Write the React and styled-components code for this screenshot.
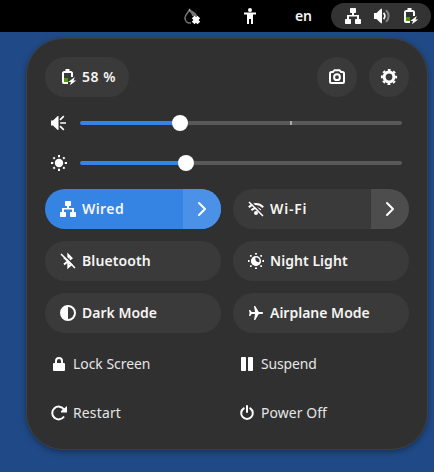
import React from "react";
import styled, { createGlobalStyle } from "styled-components";

const GlobalStyle = createGlobalStyle`
  * { box-sizing: border-box; }
  body {
    margin: 0;
    background: #204a87;
    font-family: "Noto Sans", sans-serif;
    font-size: 14px;
    color: #f6f5f4;
    overflow: hidden;
  }
`;

const Desktop = styled.div`
  width: 434px;
  height: 472px;
  background: #204a87;
`;

const TopBar = styled.header`
  height: 32px;
  padding-right: 3px;
  background: #000;
  display: flex;
  align-items: center;
  justify-content: flex-end;
  font-weight: 600;
`;

const BarItem = styled.div`
  display: flex;
  align-items: center;
  margin-right: ${(p) => p.$gap}px;
  font-size: 14px;
  line-height: 20px;
`;

const StatusPill = styled.div`
  display: flex;
  align-items: center;
  justify-content: space-between;
  width: 100px;
  height: 26px;
  padding: 0 13px 0 14px;
  border-radius: 13px;
  background: #333;
`;

const Panel = styled.main`
  width: 402px;
  height: 412px;
  margin: 6px 0 0 26px;
  padding: 18px;
  border: 1px solid #3f3f3f;
  border-radius: 37px;
  background: #303030;
  box-shadow: 0 2px 6px rgba(0, 0, 0, 0.35);
`;

const Header = styled.div`
  display: flex;
  gap: 12px;
  height: 40px;
`;

const BatteryButton = styled.button`
  display: flex;
  align-items: center;
  gap: 6px;
  width: 84px;
  height: 40px;
  margin-right: auto;
  padding: 0 0 0 15px;
  border: 0;
  border-radius: 20px;
  background: #3a3a3a;
  color: #f6f5f4;
  font: 600 14px "Noto Sans", sans-serif;
  white-space: nowrap;
`;

const RoundButton = styled.button`
  display: flex;
  align-items: center;
  justify-content: center;
  width: 40px;
  height: 40px;
  padding: 0;
  border: 0;
  border-radius: 50%;
  background: #3a3a3a;
  color: #fff;
`;

const Sliders = styled.div`
  display: grid;
  grid-auto-rows: 40px;
  padding: 6px 7px 6px 6px;
`;

const SliderRow = styled.div`
  display: flex;
  align-items: center;
  gap: 13px;
`;

const Track = styled.div`
  position: relative;
  flex: 1;
  height: 4px;
  border-radius: 2px;
  background: linear-gradient(to right, #3584e4 ${(p) => p.$value}px, #595959 ${(p) => p.$value}px);
`;

const Thumb = styled.div`
  position: absolute;
  top: -6px;
  left: ${(p) => p.$value - 8}px;
  width: 16px;
  height: 16px;
  border-radius: 50%;
  background: #fff;
`;

const Mark = styled.div`
  position: absolute;
  top: 0;
  left: 210px;
  width: 2px;
  height: 4px;
  background: #a8a8a8;
`;

const Tiles = styled.div`
  display: grid;
  grid-template-columns: 176px 176px;
  grid-auto-rows: 40px;
  gap: 12px;
`;

const Tile = styled.div`
  display: flex;
  align-items: stretch;
  overflow: hidden;
  border-radius: 20px;
  background: ${(p) => (p.$active ? "#3584e4" : "#3a3a3a")};
`;

const TileMain = styled.div`
  display: flex;
  flex: 1;
  align-items: center;
  gap: 6px;
  padding-left: 15px;
  font-weight: 600;
  font-size: 14px;
  white-space: nowrap;
`;

const Label = styled.span`
  line-height: 20px;
  padding-bottom: 1px;
  letter-spacing: ${(p) => p.$tracking || 0}px;
`;

const TileArrow = styled.div`
  display: flex;
  align-items: center;
  justify-content: center;
  width: 38px;
  background: ${(p) => (p.$active ? "#4a91e7" : "#4d4d4d")};
`;

const Actions = styled.div`
  display: grid;
  grid-template-columns: 188px 1fr;
  grid-auto-rows: 49px;
  padding: 6px 0 0 6px;
`;

const Action = styled.div`
  display: flex;
  align-items: center;
  gap: 6px;
  font-size: 13.9px;
  letter-spacing: ${(p) => p.$tracking || 0}px;
  color: #e6e6e6;
`;

const Glyph = styled.svg.attrs({ viewBox: "0 0 16 16", width: 16, height: 16 })`
  display: block;
  flex: none;
  color: #fff;
  fill: currentColor;
  overflow: visible;
`;

const line = { fill: "none", stroke: "currentColor", strokeWidth: 2 };

const Network = () => (
  <Glyph>
    <rect x="5" y="0" width="6" height="5" rx=".7" />
    <rect x="0" y="11" width="6" height="5" rx=".7" />
    <rect x="10" y="11" width="6" height="5" rx=".7" />
    <path d="M7 5h2v2h5v4h-2V8.500H4V11H2V7h5z" />
  </Glyph>
);

const Battery = () => (
  <Glyph>
    <path d="M4 9h4v4H4z" fill="#4e9a06" />
    <path d="M8 14H3.800A.8.8 0 0 1 3 13.200V4.300A1.200 1.200 0 0 1 4.200 3H10.800A1.200 1.200 0 0 1 12 4.300V8" {...line} />
    <path d="M5.500 0h4v3h-4z" />
    <path d="M14.800 8 8.300 13H11L10 16.200 16.200 11.500H13.500z" />
  </Glyph>
);

const Volume = () => (
  <Glyph>
    <path d="M0 5h2.500L7 .8h1v14.400H7L2.500 11H0z" />
    <path d="M9.500 5c1.900 1.700 1.900 4.300 0 6" {...line} strokeWidth="1.700" />
    <path d="M12 2.200c3.500 3.300 3.500 8.300 0 11.600" {...line} opacity=".4" />
  </Glyph>
);

const Speaker = () => (
  <Glyph>
    <path d="M0 5.500h2L6.700 1h.8v14h-.8L2 10.500H0z" />
    <path d="M9.200 8H15M9 4.800l3.800-3.600M9 11.200l3.800 3.600" {...line} strokeWidth="1.700" />
  </Glyph>
);

const NoDrop = () => (
  <Glyph>
    <path d="M5.800 1C5 4.300 1 6 1 10c0 3 2.200 5 5 5h1" {...line} strokeWidth="1.600" opacity=".45" />
    <path d="M5 .2C6.500 2.500 12.800 4.200 13.200 8L11.500 9.500 8 7.800C8.500 6.500 6 4.800 5 3z" opacity=".45" />
    <path d="m9.200 9 5.600 6M14.800 9l-5.600 6" {...line} strokeWidth="3.800" />
  </Glyph>
);

const Accessibility = () => (
  <Glyph>
    <circle cx="8" cy="2" r="2" />
    <path d="M2 4.500h12v2h-3V16H9v-5H7v5H5V6.500H2z" />
  </Glyph>
);

const Camera = () => (
  <Glyph>
    <path d="M1 4.500c0-.8.500-1.500 1.500-1.500H4l1.500-1.800h5L12 3h1.500c1 0 1.500.700 1.500 1.500v8c0 1-.5 1.500-1.500 1.500h-11C1.500 14 1 13.500 1 12.500z" {...line} />
    <circle cx="8" cy="8.200" r="2.900" {...line} />
  </Glyph>
);

const Gear = () => (
  <Glyph>
    <circle cx="8" cy="8" r="4.900" {...line} strokeWidth="3" />
    <circle cx="8" cy="8" r="7.100" {...line} strokeDasharray="2.788 2.788" strokeDashoffset="1.394" />
  </Glyph>
);

const Sun = () => (
  <Glyph>
    <circle cx="8" cy="8" r="4.200" />
    <path d="M8 0v2.200M8 13.800V16M0 8h2.200M13.800 8H16M2.400 2.400l1.400 1.400M12.200 12.200l1.400 1.400M2.400 13.600l1.400-1.400M12.200 3.800l1.400-1.400" {...line} />
  </Glyph>
);

const Chevron = () => (
  <Glyph>
    <path d="m5 2 6 6-6 6" {...line} strokeLinecap="round" strokeLinejoin="round" />
  </Glyph>
);

const WifiOff = () => (
  <Glyph>
    <path d="M.8 6.200C5 2 11 2 15.200 6.200M3.400 9.200c2.700-2.600 6.500-2.600 9.200 0" {...line} />
    <circle cx="8" cy="12" r="2" />
    <path d="M2 0 16 14" stroke="#3a3a3a" strokeWidth="1.600" />
    <path d="m1 1 14 14" {...line} strokeWidth="1.500" />
  </Glyph>
);

const BluetoothOff = () => (
  <Glyph>
    <path d="m4 11.500 7.500-6.300L8.300 2v12l3.200-2.800L4 4.500" {...line} />
    <path d="M2.200 0 16 13.800" stroke="#3a3a3a" strokeWidth="1.400" />
    <path d="m1 1 14 14" {...line} strokeWidth="1.600" />
  </Glyph>
);

const NightLight = () => (
  <Glyph>
    <circle cx="8" cy="8" r="4.300" {...line} strokeWidth="1.600" />
    <path d="M7.500 3.500A4.500 4.500 0 1 0 12.500 8.500C10 10.500 6.300 8 7.500 3.500" />
    <path d="M7 0h2v1.600H7zM7 14.400h2V16H7zM0 7h1.600v2H0zM14.400 7H16v2h-1.600zM2 2h1.700v1.700H2zM12.300 2H14v1.700h-1.700zM2 12.300h1.700V14H2zM12.300 12.300H14V14h-1.700z" />
  </Glyph>
);

const Contrast = () => (
  <Glyph>
    <circle cx="8" cy="8" r="7" {...line} />
    <path d="M8 1v14A7 7 0 0 1 8 1" />
  </Glyph>
);

const Plane = () => (
  <Glyph>
    <path d="M1 5h1.200l1.500 2H7L6 1h1.200l3.600 6H14c1.500 0 1.500 2 0 2h-3.200l-3.600 6H6l1-6H3.700l-1.500 2H1l.6-3z" />
  </Glyph>
);

const Lock = () => (
  <Glyph>
    <rect x="2" y="7" width="12" height="8" rx="1" />
    <path d="M5 8V5a3 3 0 0 1 6 0v3" {...line} />
  </Glyph>
);

const Pause = () => (
  <Glyph>
    <rect x="2" y="1" width="5" height="14" rx=".7" />
    <rect x="9" y="1" width="5" height="14" rx=".7" />
  </Glyph>
);

const Restart = () => (
  <Glyph>
    <path d="M13 11.500A6.400 6.400 0 1 1 13 4.500" {...line} />
    <path d="M16 1v6.500h-6V6z" />
  </Glyph>
);

const Power = () => (
  <Glyph>
    <path d="M4.800 3.300a5.800 5.800 0 1 0 6.400 0M8 1v6" {...line} strokeLinecap="round" />
  </Glyph>
);

const tiles = [
  { label: "Wired", icon: Network, active: true, menu: true, tracking: 0.4 },
  { label: "Wi-Fi", icon: WifiOff, menu: true, tracking: 0.8 },
  { label: "Bluetooth", icon: BluetoothOff, tracking: 0.1 },
  { label: "Night Light", icon: NightLight, tracking: 0.05 },
  { label: "Dark Mode", icon: Contrast },
  { label: "Airplane Mode", icon: Plane },
];

const actions = [
  { label: "Lock Screen", icon: Lock },
  { label: "Suspend", icon: Pause, tracking: -0.1 },
  { label: "Restart", icon: Restart, tracking: 0.2 },
  { label: "Power Off", icon: Power, tracking: 0.1 },
];

export default function App() {
  return (
    <Desktop>
      <GlobalStyle />
      <TopBar>
        <BarItem $gap={42}><NoDrop /></BarItem>
        <BarItem $gap={37}><Accessibility /></BarItem>
        <BarItem $gap={19}>en</BarItem>
        <StatusPill>
          <Network />
          <Volume />
          <Battery />
        </StatusPill>
      </TopBar>
      <Panel>
        <Header>
          <BatteryButton><Battery /><Label $tracking={0.5}>58 %</Label></BatteryButton>
          <RoundButton aria-label="Take screenshot"><Camera /></RoundButton>
          <RoundButton aria-label="Settings"><Gear /></RoundButton>
        </Header>
        <Sliders>
          <SliderRow>
            <Speaker />
            <Track $value={100}><Mark /><Thumb $value={100} /></Track>
          </SliderRow>
          <SliderRow>
            <Sun />
            <Track $value={105.5}><Thumb $value={105.5} /></Track>
          </SliderRow>
        </Sliders>
        <Tiles>
          {tiles.map(({ label, icon: Icon, active, menu, tracking }) => (
            <Tile key={label} $active={active}>
              <TileMain><Icon /><Label $tracking={tracking}>{label}</Label></TileMain>
              {menu && <TileArrow $active={active}><Chevron /></TileArrow>}
            </Tile>
          ))}
        </Tiles>
        <Actions>
          {actions.map(({ label, icon: Icon, tracking }) => (
            <Action key={label} $tracking={tracking}><Icon />{label}</Action>
          ))}
        </Actions>
      </Panel>
    </Desktop>
  );
}
